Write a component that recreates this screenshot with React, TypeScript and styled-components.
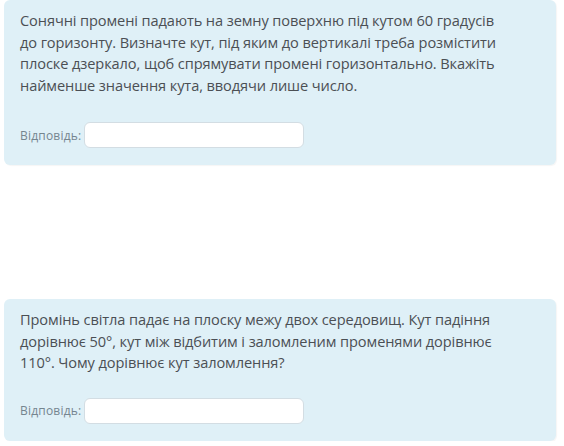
import styled, { createGlobalStyle } from 'styled-components'

const GlobalStyle = createGlobalStyle`
  html, body {
    margin: 0;
    padding: 0;
    background: #fff;
  }
  body {
    font-family: "Open Sans", "Noto Sans", sans-serif;
  }
`

const Page = styled.div`
  width: 564px;
  padding: 0 8px 0 4px;
  box-sizing: border-box;
  display: flex;
  flex-direction: column;
  gap: 134px;
`

const Card = styled.div`
  background: #dff0f7;
  border-radius: 6px;
  padding: 10px 16px 17px 16px;
  box-shadow: 1px 1px 1px rgba(0, 0, 0, 0.04);
`

const Question = styled.div<{ $gap: number }>`
  color: #4b4f54;
  font-size: 14.6px;
  letter-spacing: -0.1px;
  line-height: 21.5px;
  max-width: 488px;
  margin-bottom: ${(p) => p.$gap}px;
`

const AnswerRow = styled.div`
  display: flex;
  align-items: center;
  gap: 3px;
`

const Label = styled.label`
  color: #75858f;
  font-size: 12px;
  letter-spacing: 0.2px;
`

const Input = styled.input`
  width: 220px;
  height: 26px;
  box-sizing: border-box;
  border: 1px solid #d3dde3;
  border-radius: 6px;
  background: #fff;
  outline: none;
  padding: 0 8px;
`

const questions = [
  {
    text: 'Сонячні промені падають на земну поверхню під кутом 60 градусів до горизонту. Визначте кут, під яким до вертикалі треба розмістити плоске дзеркало, щоб спрямувати промені горизонтально. Вкажіть найменше значення кута, вводячи лише число.',
    gap: 26,
  },
  {
    text: 'Промінь світла падає на плоску межу двох середовищ. Кут падіння дорівнює 50°, кут між відбитим і заломленим променями дорівнює 110°. Чому дорівнює кут заломлення?',
    gap: 24,
  },
]

export default function App() {
  return (
    <>
      <GlobalStyle />
      <Page>
        {questions.map((q, i) => (
          <Card key={i}>
            <Question $gap={q.gap}>{q.text}</Question>
            <AnswerRow>
              <Label>Відповідь:</Label>
              <Input type="text" />
            </AnswerRow>
          </Card>
        ))}
      </Page>
    </>
  )
}
